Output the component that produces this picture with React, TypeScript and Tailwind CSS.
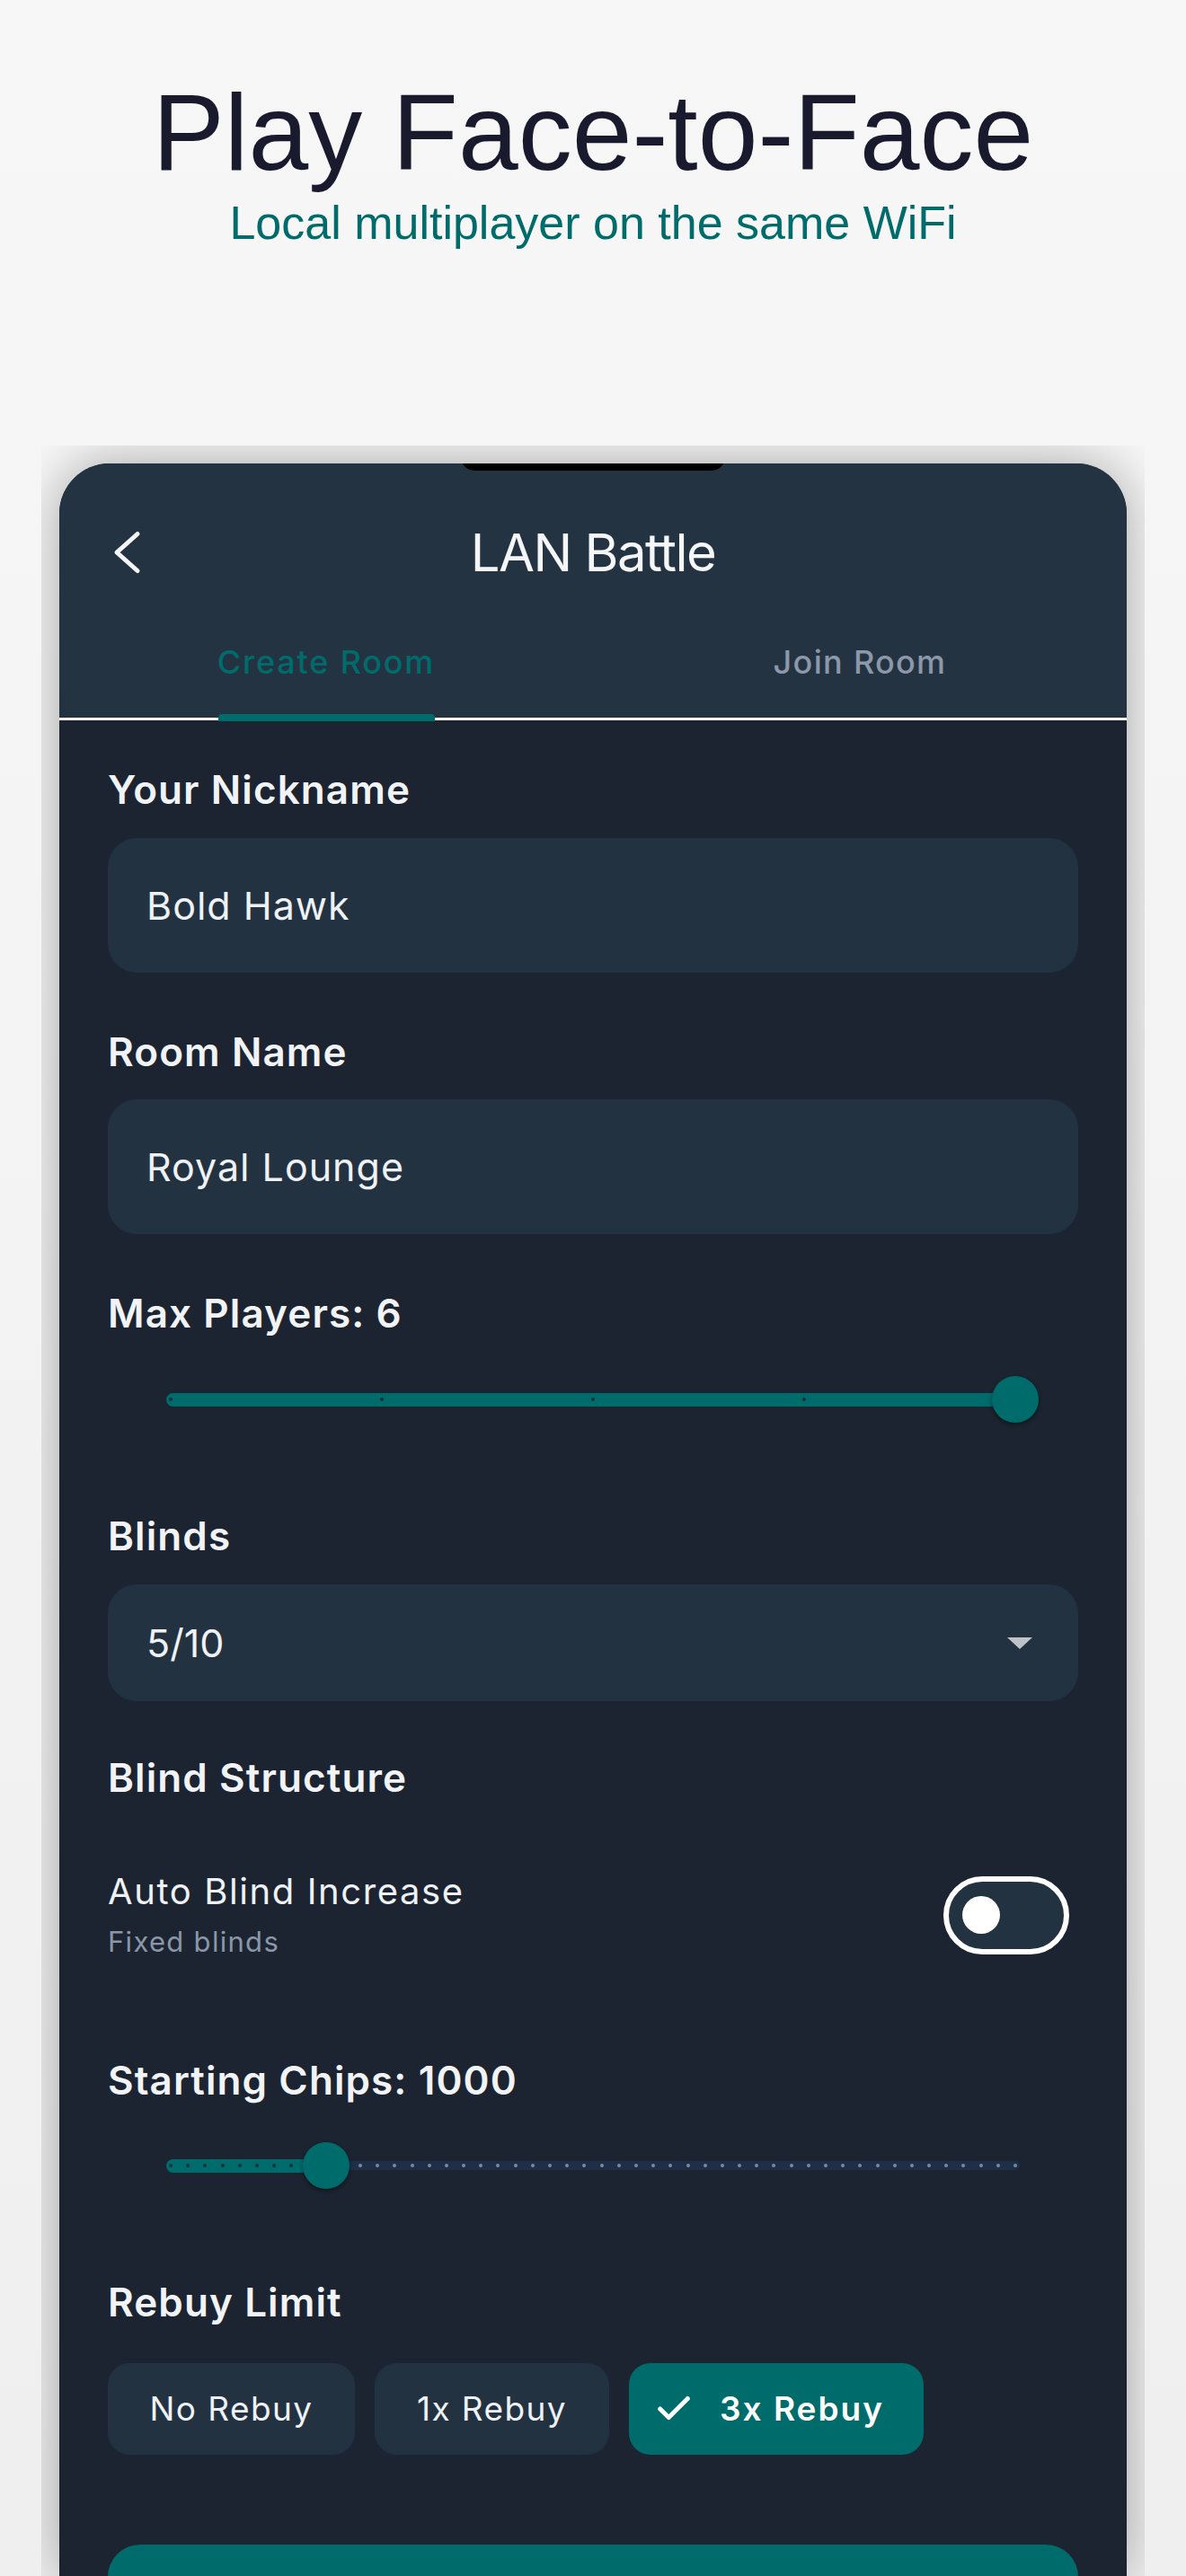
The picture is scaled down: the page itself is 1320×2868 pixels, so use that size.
import React from "react";

function Label({ children }: { children: React.ReactNode }) {
  return (
    <div className="text-[44px] leading-[52px] font-semibold text-[#f1f3f6] tracking-[1.1px]">
      {children}
    </div>
  );
}

function Slider({ steps, value, thin }: { steps: number; value: number; thin?: boolean }) {
  const trackW = 950;
  const inset = 5;
  const range = trackW - inset * 2;
  const frac = value / steps;
  const cx = inset + frac * range;
  const ticks = Array.from({ length: steps + 1 }, (_, i) => inset + (i / steps) * range);
  return (
    <div className="h-[60px] px-[65px] flex items-center">
      <div className="relative w-full h-[15px]">
        {thin ? (
          <div
            className="absolute top-[2.5px] right-0 h-[10px] rounded-r-full bg-[#1e3049]"
            style={{ left: cx }}
          />
        ) : null}
        <div
          className="absolute top-0 left-0 h-[15px] rounded-full bg-[#006b6b]"
          style={{ width: thin ? cx + 8 : trackW }}
        />
        {ticks.map((t, i) => (
          <div
            key={i}
            className={
              "absolute top-[5.5px] w-[4px] h-[4px] rounded-full " +
              (t <= cx + 0.5 ? "bg-[#16303a]" : "bg-[#7d8898]")
            }
            style={{ left: t - 2 }}
          />
        ))}
        <div
          className="absolute top-[-18.5px] w-[52px] h-[52px] rounded-full bg-[#006b6b] shadow-[0_2px_5px_rgba(0,0,0,0.45)]"
          style={{ left: cx - 26 }}
        />
      </div>
    </div>
  );
}

export default function App() {
  return (
    <div
      className="w-[1320px] h-[2868px] overflow-hidden bg-gradient-to-b from-[#f7f7f7] to-[#efefef] flex flex-col items-center"
      style={{ fontFamily: "Inter, 'Noto Sans', sans-serif" }}
    >
      {/* Hero */}
      <div
        className="mt-[87px] text-[120px] leading-[120px] text-[#1a1a2e] whitespace-nowrap"
        style={{ fontFamily: "'Liberation Sans', Arial, sans-serif" }}
      >
        Play Face-to-Face
      </div>
      <div
        className="mt-[15px] text-[52px] leading-[52px] text-[#006b6b] whitespace-nowrap"
        style={{ fontFamily: "'Liberation Sans', Arial, sans-serif" }}
      >
        Local multiplayer on the same WiFi
      </div>

      {/* Phone clip area */}
      <div className="mt-[222px] w-[1228px] flex-1 overflow-hidden pt-[20px] px-[20px]">
        <div className="relative h-full rounded-t-[56px] overflow-hidden bg-[#1b2430] shadow-[0_0_60px_rgba(0,0,0,0.33)]">
          {/* notch */}
          <div className="absolute top-[-22px] left-[447px] w-[294px] h-[30px] rounded-full bg-black" />

          {/* Header */}
          <div className="bg-[#243341] pt-[39px] border-b-[3px] border-white">
            <div className="h-[120px] grid grid-cols-[1fr_auto_1fr] items-center">
              <div className="pl-[54px]">
                <svg width="40" height="60" viewBox="0 0 40 60" fill="none">
                  <path
                    d="M33 9.5 L10 30 L33 50.5"
                    stroke="#f4f6f8"
                    strokeWidth="5"
                    strokeLinecap="round"
                    strokeLinejoin="round"
                  />
                </svg>
              </div>
              <div className="text-[58px] leading-[70px] text-[#f4f6f8] tracking-[-1.5px]">LAN Battle</div>
              <div />
            </div>
            <div className="h-[124px] grid grid-cols-2">
              <div className="relative flex items-center justify-center">
                <span className="text-[36px] leading-[44px] font-medium text-[#006b6b] tracking-[1.8px]">
                  Create Room
                </span>
                <div className="absolute bottom-[-4px] left-[177px] w-[241px] h-[8px] rounded-t-[4px] bg-[#006b6b]" />
              </div>
              <div className="flex items-center justify-center">
                <span className="text-[36px] leading-[44px] font-medium text-[#8c98a9] tracking-[1.3px]">
                  Join Room
                </span>
              </div>
            </div>
          </div>

          {/* Body */}
          <div className="px-[54px] pt-[51px] flex flex-col">
            <Label>Your Nickname</Label>
            <div className="mt-[28px] h-[150px] rounded-[32px] bg-[#233241] border border-[#1f3147] flex items-center pl-[42px]">
              <span className="text-[43px] text-[#eef1f5] tracking-[1px]">Bold Hawk</span>
            </div>

            <div className="mt-[62px]">
              <Label>Room Name</Label>
            </div>
            <div className="mt-[27px] h-[150px] rounded-[32px] bg-[#233241] border border-[#1f3147] flex items-center pl-[42px]">
              <span className="text-[43px] text-[#eef1f5] tracking-[1px]">Royal Lounge</span>
            </div>

            <div className="mt-[62px]">
              <Label>Max Players: 6</Label>
            </div>
            <div className="mt-[40px]">
              <Slider steps={4} value={4} />
            </div>

            <div className="mt-[96px]">
              <Label>Blinds</Label>
            </div>
            <div className="mt-[28px] h-[130px] rounded-[32px] bg-[#233241] border border-[#1f3147] flex items-center justify-between pl-[42px] pr-[50px]">
              <span className="text-[43px] text-[#eef1f5]">5/10</span>
              <svg width="28" height="13" viewBox="0 0 28 13">
                <polygon points="0,0 28,0 14,13" fill="#bfc3c8" />
              </svg>
            </div>

            <div className="mt-[59px]">
              <Label>Blind Structure</Label>
            </div>
            <div className="mt-[77px] h-[100px] flex items-center justify-between">
              <div className="flex flex-col">
                <span className="text-[40px] leading-[48px] text-[#eef1f5] tracking-[1.6px]">
                  Auto Blind Increase
                </span>
                <span className="mt-[12px] text-[31px] leading-[40px] text-[#8a97a8] tracking-[1.3px]">
                  Fixed blinds
                </span>
              </div>
              <div className="mr-[10px] w-[140px] h-[87px] rounded-full border-[6px] border-white bg-[#233240] flex items-center pl-[15px]">
                <div className="w-[42px] h-[42px] rounded-full bg-white" />
              </div>
            </div>

            <div className="mt-[108px]">
              <Label>Starting Chips: 1000</Label>
            </div>
            <div className="mt-[39px]">
              <Slider steps={49} value={9} thin />
            </div>

            <div className="mt-[96px]">
              <Label>Rebuy Limit</Label>
            </div>
            <div className="mt-[42px] flex gap-[22px]">
              <div className="h-[102px] w-[275px] rounded-[24px] bg-[#233241] border border-[#1f3147] flex items-center justify-center">
                <span className="text-[37px] text-[#eef1f5] tracking-[1.4px]">No Rebuy</span>
              </div>
              <div className="h-[102px] w-[261px] rounded-[24px] bg-[#233241] border border-[#1f3147] flex items-center justify-center">
                <span className="text-[37px] text-[#eef1f5] tracking-[1.4px]">1x Rebuy</span>
              </div>
              <div className="h-[102px] w-[328px] rounded-[24px] bg-[#006b6b] flex items-center pl-[27px]">
                <svg width="46" height="46" viewBox="0 0 24 24" fill="none">
                  <path
                    d="M20 6 9 17l-5-5"
                    stroke="#ffffff"
                    strokeWidth="2.6"
                    strokeLinecap="round"
                    strokeLinejoin="round"
                  />
                </svg>
                <span className="ml-[28px] text-[37px] font-semibold text-white tracking-[2px]">3x Rebuy</span>
              </div>
            </div>

            <div className="mt-[100px] h-[150px] rounded-[36px] bg-[#006b6b]" />
          </div>
        </div>
      </div>
    </div>
  );
}
